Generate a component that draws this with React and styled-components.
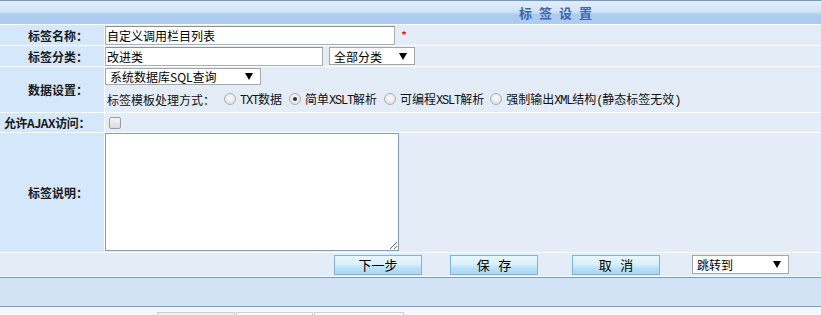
import React from "react";
import styled, { createGlobalStyle } from "styled-components";

const Global = createGlobalStyle`
  html, body { margin: 0; padding: 0; background: #ecf3fb; }
  body { font-family: "Noto Sans CJK SC", "Liberation Sans", sans-serif; font-size: 12px; color: #000; }
`;

const Page = styled.div`
  width: 821px;
  height: 315px;
  overflow: hidden;
  background: linear-gradient(#e6eef9, #f4f8fd);
`;

const Header = styled.div`
  height: 23px;
  border-top: 1px solid #6a98d0;
  background: linear-gradient(#e2edf9 0%, #d3e4f7 45%, #abcbef 60%, #aecdf0 100%);
  display: flex;
  align-items: center;
  padding-left: 519px;
  box-sizing: content-box;
`;

const Title = styled.span`
  font-size: 13px;
  font-weight: bold;
  color: #3d66ad;
  letter-spacing: 7px;
  line-height: 1;
`;

const Grid = styled.div`
  display: grid;
  grid-template-columns: 104px 1fr;
  grid-template-rows: 20px 20px 45px 19px 119px 23px;
  gap: 1px;
  padding: 1px 0;
  background: #fdfeff;
`;

const Label = styled.div`
  background: #d5e7fb;
  display: flex;
  align-items: center;
  justify-content: flex-end;
  padding-right: ${(p) => p.$pr ?? 16}px;
  font-weight: bold;
  font-size: 12px;
  color: #1a1a1a;
  white-space: nowrap;
  letter-spacing: ${(p) => p.$ls || 0}px;
`;

const Cell = styled.div`
  background: #e4ecf7;
  display: flex;
  flex-direction: ${(p) => (p.$column ? "column" : "row")};
  align-items: ${(p) => (p.$column ? "flex-start" : "center")};
  gap: ${(p) => p.$gap || 0}px;
  padding: ${(p) => p.$pad || "0"};
  grid-column: ${(p) => (p.$span ? "1 / -1" : "auto")};
`;

const TextInput = styled.div`
  width: ${(p) => p.$w}px;
  height: ${(p) => p.$h || 19}px;
  box-sizing: border-box;
  border: 1px solid #a9adb4;
  border-top-color: #8c9096;
  background: #fff;
  font-size: 12px;
  line-height: 17px;
  padding-left: 1px;
  margin-top: ${(p) => p.$mt || 0}px;
  white-space: nowrap;
`;

const Star = styled.span`
  color: #f00;
  font-size: 13px;
  margin-left: 6px;
  margin-top: 1px;
`;

const SelectBox = styled.div`
  width: ${(p) => p.$w}px;
  height: ${(p) => p.$h || 18}px;
  box-sizing: border-box;
  border: 1px solid #a6a6a6;
  background: #fff;
  display: flex;
  align-items: center;
  justify-content: space-between;
  padding: 0 7px 0 4px;
  margin-left: ${(p) => p.$ml || 0}px;
  font-size: 12px;
  white-space: nowrap;
`;

const Arrow = styled.span`
  width: 0;
  height: 0;
  border-left: 4px solid transparent;
  border-right: 4px solid transparent;
  border-top: 7px solid #000;
`;

const RadioLine = styled.div`
  display: flex;
  align-items: center;
  padding-left: 2px;
  height: 16px;
  white-space: nowrap;
`;

const Radio = styled.span`
  width: 12px;
  height: 12px;
  box-sizing: border-box;
  border-radius: 50%;
  border: 1px solid #aab0b8;
  background: radial-gradient(circle at 50% 40%, #fdfdfd 0%, #e4e4e4 70%, #d6d6d6 100%);
  margin: 0 4px 0 ${(p) => p.$ml}px;
  display: inline-flex;
  align-items: center;
  justify-content: center;
  flex: none;
  &::after {
    content: "";
    width: 4px;
    height: 4px;
    border-radius: 50%;
    background: ${(p) => (p.$checked ? "#333" : "transparent")};
  }
`;

const RadioText = styled.span`
  font-size: 12px;
  color: #111;
`;

const Mono = styled.span`
  font-family: "Liberation Mono", monospace;
  font-size: 12px;
  letter-spacing: -1.2px;
`;

const Check = styled.span`
  width: 12px;
  height: 12px;
  box-sizing: border-box;
  border: 1px solid #9a9fa6;
  border-radius: 2px;
  background: linear-gradient(#f4f4f4, #dcdcdc);
  margin-left: 4px;
`;

const TextArea = styled.textarea`
  width: 294px;
  height: 118px;
  box-sizing: border-box;
  border: 1px solid #7f9db9;
  background: #fff;
  margin: 0;
  padding: 2px;
  font-family: inherit;
  outline: none;
  resize: both;
  align-self: flex-start;
`;

const Button = styled.button`
  width: 88px;
  height: 20px;
  box-sizing: border-box;
  border: 1px solid #7fb2e0;
  background: linear-gradient(#e9f7fd 0%, #d9f0fb 45%, #b9e0f7 70%, #a9d7f5 100%);
  font-family: "Noto Sans CJK SC", sans-serif;
  font-size: 13px;
  line-height: 16px;
  color: #000;
  padding: 0;
  margin-left: ${(p) => p.$ml}px;
  white-space: pre;
`;

const Band = styled.div`
  height: 28px;
  border-top: 1px solid #6f9dd2;
  border-bottom: 1px solid #6f9dd2;
  background: #d3e2f5;
`;

const Tabs = styled.div`
  display: flex;
  padding: 5px 0 0 157px;
`;

const Tab = styled.div`
  width: ${(p) => p.$w}px;
  height: 10px;
  box-sizing: border-box;
  border: 1px solid #cfcfcf;
  border-bottom: none;
  background: ${(p) => (p.$active ? "#f1f1f1" : "#fbfbfb")};
  margin-right: 1px;
`;

const radios = [
  { key: "txt", label: <><Mono>TXT</Mono>数据</>, ml: 9 },
  { key: "simple", label: <>简单<Mono>XSLT</Mono>解析</>, ml: 7, checked: true },
  { key: "prog", label: <>可编程<Mono>XSLT</Mono>解析</>, ml: 7 },
  { key: "xml", label: <>强制输出<Mono>XML</Mono>结构<Mono>(</Mono>静态标签无效<Mono>)</Mono></>, ml: 6 },
];

export default function App() {
  return (
    <Page>
      <Global />
      <Header>
        <Title>标签设置</Title>
      </Header>
      <Grid>
        <Label>标签名称：</Label>
        <Cell>
          <TextInput $w={290} $mt={1}>自定义调用栏目列表</TextInput>
          <Star>*</Star>
        </Cell>
        <Label>标签分类：</Label>
        <Cell>
          <TextInput $w={218} $mt={1}>改进类</TextInput>
          <SelectBox $w={86} $ml={6}>
            <span>全部分类</span>
            <Arrow />
          </SelectBox>
        </Cell>
        <Label>数据设置：</Label>
        <Cell $column $gap={6} $pad="1px 0 0 0">
          <SelectBox $w={156} $h={17}>
            <span>系统数据库SQL查询</span>
            <Arrow />
          </SelectBox>
          <RadioLine>
            <RadioText>标签模板处理方式：</RadioText>
            {radios.map((r) => (
              <React.Fragment key={r.key}>
                <Radio $ml={r.ml} $checked={r.checked} />
                <RadioText>{r.label}</RadioText>
              </React.Fragment>
            ))}
          </RadioLine>
        </Cell>
        <Label $pr={14} $ls={-0.4}>允许AJAX访问：</Label>
        <Cell>
          <Check />
        </Cell>
        <Label>标签说明：</Label>
        <Cell>
          <TextArea />
        </Cell>
        <Cell $span $pad="0 0 0 334px">
          <Button $ml={0}>下一步</Button>
          <Button $ml={28}>保   存</Button>
          <Button $ml={34}>取   消</Button>
          <SelectBox $w={97} $h={19} $ml={32}>
            <span>跳转到</span>
            <Arrow />
          </SelectBox>
        </Cell>
      </Grid>
      <Band />
      <Tabs>
        <Tab $w={78} $active />
        <Tab $w={77} />
        <Tab $w={90} />
      </Tabs>
    </Page>
  );
}
